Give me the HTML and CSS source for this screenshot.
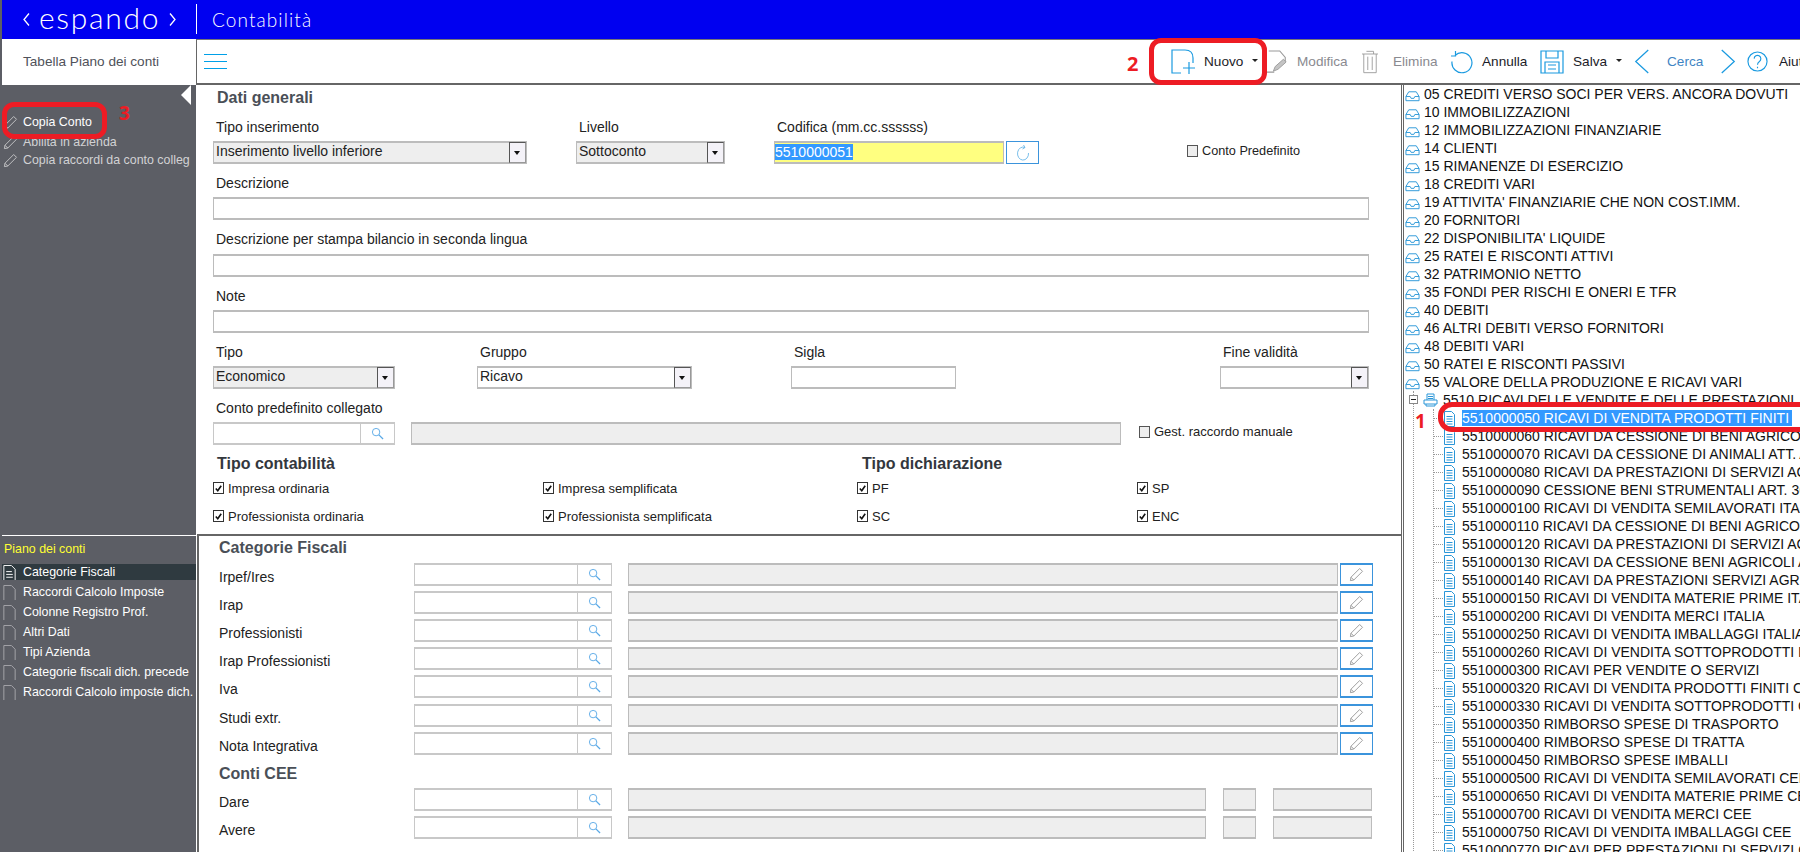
FILE: index.html
```html
<!DOCTYPE html>
<html lang="it">
<head>
<meta charset="utf-8">
<title>Contabilità</title>
<link rel="stylesheet" href="styles.css">
</head>
<body>
<svg class="defs" aria-hidden="true">
  <symbol id="i-pencil" viewBox="0 0 16 16"><path d="M1.5 14.5l.6-3.6L11.4 1.6l3 3-9.3 9.3zM2.1 10.9l3 3" fill="none" stroke="currentColor"/></symbol>
  <symbol id="i-page" viewBox="0 0 13 17"><path d="M.5.5h8l4 4v12H.5z" fill="none" stroke="currentColor"/></symbol>
  <symbol id="i-pagelines" viewBox="0 0 13 17"><path d="M.5.5h8l4 4v12H.5zM3 7h6M3 10h7M3 13h7" fill="none" stroke="currentColor"/></symbol>
  <symbol id="i-doc" viewBox="0 0 11 16"><path d="M.5.5h7l3 3v12H.5zM2.5 5.5h6M2.5 8h6M2.5 10.500h6M2.5 13h6" fill="none" stroke="currentColor"/></symbol>
  <symbol id="i-tray" viewBox="0 0 16 12"><path d="M1 6.500L4 1.500h8l3 5v4.500H1zM1 6.500h4.500l1 2h3l1-2H15" fill="none" stroke="currentColor"/></symbol>
  <symbol id="i-print" viewBox="0 0 15 14"><path d="M4 7V1h7v6M1 7h13v4H1zM3 11v2h9v-2M5 3.500h5M5 5.500h5" fill="none" stroke="currentColor"/></symbol>
  <symbol id="i-search" viewBox="0 0 14 14"><circle cx="5.500" cy="5.500" r="4" fill="none" stroke="currentColor"/><path d="M8.500 8.500l4.500 4.500" fill="none" stroke="currentColor" stroke-width="1.400"/></symbol>
  <symbol id="i-refresh" viewBox="0 0 14 18"><path d="M9 3.500A5.500 6.500 0 1 0 12.500 9M7.500 1L9 3.500 6.500 5" fill="none" stroke="currentColor" stroke-width=".9"/></symbol>
  <symbol id="i-new" viewBox="0 0 24 26"><path d="M14 1H1v23h9M14 1q8 0 8 8v5M18 13v12M12 19h12" fill="none" stroke="currentColor" stroke-width="1.200"/></symbol>
  <symbol id="i-editdoc" viewBox="0 0 24 26"><path d="M3 1h12l6 7v4M1 24h8" fill="none" stroke="currentColor" stroke-width="1.200"/><path d="M8 23l2-5 9-8 3 3-9 8z" fill="#c4c4c4" stroke="currentColor"/></symbol>
  <symbol id="i-trash" viewBox="0 0 18 26"><path d="M0 4h18M5 1h8v3M2 4v21h14V4M6.500 7v15M11.500 7v15" fill="none" stroke="currentColor"/></symbol>
  <symbol id="i-undo" viewBox="0 0 23 24"><path d="M5 5.500a10 10 0 1 1-3 6M5.500 1v5H1" fill="none" stroke="currentColor" stroke-width="1.200"/></symbol>
  <symbol id="i-save" viewBox="0 0 24 24"><path d="M1 1h22v22H1zM6 1v7h12V1M5 23V12h14v11M8 15h8M8 19h8" fill="none" stroke="currentColor" stroke-width="1.200"/></symbol>
  <symbol id="i-left" viewBox="0 0 14 24"><path d="M13 1L1 12l12 11" fill="none" stroke="currentColor" stroke-width="1.200"/></symbol>
  <symbol id="i-right" viewBox="0 0 14 24"><path d="M1 1l12 11L1 23" fill="none" stroke="currentColor" stroke-width="1.200"/></symbol>
  <symbol id="i-help" viewBox="0 0 22 22"><circle cx="11" cy="11" r="10" fill="none" stroke="currentColor" stroke-width="1.200"/><path d="M7.500 8a3.500 3.500 0 1 1 5.500 3c-1.500 1-2 1.500-2 3.500M11 16.500v1.500" fill="none" stroke="currentColor" stroke-width="1.200"/></symbol>
  <symbol id="i-check" viewBox="0 0 10 10"><path d="M2 5l2.200 2.500L8 2" fill="none" stroke="#111" stroke-width="1.800"/></symbol>
</svg>

<div class="app">
  <header class="topbar">
    <div class="logo">
      <svg class="logo-chev" viewBox="0 0 7 13"><path d="M6 .5L1 6.500l5 6" fill="none" stroke="#fff" stroke-width="1.300"/></svg>
      <span class="logo-text">espando</span>
      <svg class="logo-chev" viewBox="0 0 7 13"><path d="M1 .5l5 6-5 6" fill="none" stroke="#fff" stroke-width="1.300"/></svg>
    </div>
    <div class="module">Contabilità</div>
  </header>

  <div class="subbar">
    <div class="tab">Tabella Piano dei conti</div>
    <div class="toolbar">
      <div class="burger"><span></span><span></span><span></span></div>
      <div class="tools">
        <div class="tool tool-blue"><svg class="ti ti-new"><use href="#i-new"/></svg><span class="tl">Nuovo</span><span class="caret"></span></div>
        <div class="tool tool-gray"><svg class="ti ti-edit"><use href="#i-editdoc"/></svg><span class="tl">Modifica</span></div>
        <div class="tool tool-gray"><svg class="ti ti-trash"><use href="#i-trash"/></svg><span class="tl tl-wide">Elimina</span></div>
        <div class="tool tool-blue"><svg class="ti ti-undo"><use href="#i-undo"/></svg><span class="tl">Annulla</span></div>
        <div class="tool tool-blue"><svg class="ti ti-save"><use href="#i-save"/></svg><span class="tl">Salva</span><span class="caret"></span></div>
        <div class="tool tool-blue"><svg class="ti ti-chev"><use href="#i-left"/></svg><span class="tl tl-cerca">Cerca</span></div>
        <div class="tool tool-blue"><svg class="ti ti-chev"><use href="#i-right"/></svg></div>
        <div class="tool tool-blue"><svg class="ti ti-help"><use href="#i-help"/></svg><span class="tl tl-aiuto">Aiuto</span></div>
      </div>
    </div>
  </div>

  <div class="content">
    <aside class="sidebar">
      <div class="side-top">
        <div class="collapse"></div>
        <div class="side-action side-action-first"><svg class="si"><use href="#i-pencil"/></svg><span>Copia Conto</span></div>
        <div class="side-action side-dim"><svg class="si"><use href="#i-pencil"/></svg><span>Abilita in azienda</span></div>
        <div class="side-action side-dim"><svg class="si"><use href="#i-pencil"/></svg><span>Copia raccordi da conto colleg</span></div>
      </div>
      <div class="side-bottom">
        <div class="side-title">Piano dei conti</div>
        <div class="nav-item active"><svg class="ni"><use href="#i-pagelines"/></svg><span>Categorie Fiscali</span></div>
        <div class="nav-item"><svg class="ni"><use href="#i-page"/></svg><span>Raccordi Calcolo Imposte</span></div>
        <div class="nav-item"><svg class="ni"><use href="#i-page"/></svg><span>Colonne Registro Prof.</span></div>
        <div class="nav-item"><svg class="ni"><use href="#i-page"/></svg><span>Altri Dati</span></div>
        <div class="nav-item"><svg class="ni"><use href="#i-page"/></svg><span>Tipi Azienda</span></div>
        <div class="nav-item"><svg class="ni"><use href="#i-page"/></svg><span>Categorie fiscali dich. precede</span></div>
        <div class="nav-item"><svg class="ni"><use href="#i-page"/></svg><span>Raccordi Calcolo imposte dich.</span></div>
      </div>
    </aside>

    <main class="main">
      <section class="general">
        <h2 class="h-general">Dati generali</h2>

        <div class="row">
          <div class="field w-tipoins"><label class="lbl">Tipo inserimento</label><div class="sel sel-off"><span>Inserimento livello inferiore</span><i class="arrow"></i></div></div>
          <div class="field w-livello"><label class="lbl">Livello</label><div class="sel sel-off"><span>Sottoconto</span><i class="arrow"></i></div></div>
          <div class="field w-codifica"><label class="lbl">Codifica (mm.cc.ssssss)</label><div class="inp inp-yellow"><span class="selected-text">5510000051</span></div></div>
          <button class="btn-refresh"><svg class="rf"><use href="#i-refresh"/></svg></button>
          <div class="chk chk-pred"><span class="box box-off"></span>Conto Predefinito</div>
        </div>

        <div class="field w-full"><label class="lbl">Descrizione</label><div class="inp"></div></div>
        <div class="field w-full"><label class="lbl lbl-27">Descrizione per stampa bilancio in seconda lingua</label><div class="inp"></div></div>
        <div class="field w-full"><label class="lbl">Note</label><div class="inp"></div></div>

        <div class="row row-b">
          <div class="field w-tipo"><label class="lbl">Tipo</label><div class="sel sel-off"><span>Economico</span><i class="arrow"></i></div></div>
          <div class="field w-gruppo"><label class="lbl">Gruppo</label><div class="sel"><span>Ricavo</span><i class="arrow"></i></div></div>
          <div class="field w-sigla"><label class="lbl">Sigla</label><div class="inp"></div></div>
          <div class="field w-fine"><label class="lbl">Fine validità</label><div class="sel"><span></span><i class="arrow"></i></div></div>
        </div>

        <div class="row">
          <div class="field w-lookup-a"><label class="lbl">Conto predefinito collegato</label><div class="lookup"><div class="lookup-in"></div><div class="lookup-btn"><svg class="sr"><use href="#i-search"/></svg></div></div></div>
          <div class="field w-linked"><label class="lbl">&nbsp;</label><div class="inp inp-off"></div></div>
          <div class="chk chk-gest"><span class="box box-off"></span>Gest. raccordo manuale</div>
        </div>

        <div class="heads">
          <h3 class="h-sub">Tipo contabilità</h3>
          <h3 class="h-sub">Tipo dichiarazione</h3>
        </div>
        <div class="checks">
          <div class="chk"><span class="box"><svg class="ck"><use href="#i-check"/></svg></span>Impresa ordinaria</div>
          <div class="chk"><span class="box"><svg class="ck"><use href="#i-check"/></svg></span>Impresa semplificata</div>
          <div class="chk"><span class="box"><svg class="ck"><use href="#i-check"/></svg></span>PF</div>
          <div class="chk"><span class="box"><svg class="ck"><use href="#i-check"/></svg></span>SP</div>
          <div class="chk"><span class="box"><svg class="ck"><use href="#i-check"/></svg></span>Professionista ordinaria</div>
          <div class="chk"><span class="box"><svg class="ck"><use href="#i-check"/></svg></span>Professionista semplificata</div>
          <div class="chk"><span class="box"><svg class="ck"><use href="#i-check"/></svg></span>SC</div>
          <div class="chk"><span class="box"><svg class="ck"><use href="#i-check"/></svg></span>ENC</div>
        </div>
      </section>

      <section class="fiscal">
        <h2 class="h-fiscal">Categorie Fiscali</h2>
        <div class="frow"><div class="flbl">Irpef/Ires</div><div class="lookup"><div class="lookup-in"></div><div class="lookup-btn"><svg class="sr"><use href="#i-search"/></svg></div></div><div class="inp inp-off"></div><button class="btn-edit"><svg class="ed"><use href="#i-pencil"/></svg></button></div>
        <div class="frow"><div class="flbl">Irap</div><div class="lookup"><div class="lookup-in"></div><div class="lookup-btn"><svg class="sr"><use href="#i-search"/></svg></div></div><div class="inp inp-off"></div><button class="btn-edit"><svg class="ed"><use href="#i-pencil"/></svg></button></div>
        <div class="frow"><div class="flbl">Professionisti</div><div class="lookup"><div class="lookup-in"></div><div class="lookup-btn"><svg class="sr"><use href="#i-search"/></svg></div></div><div class="inp inp-off"></div><button class="btn-edit"><svg class="ed"><use href="#i-pencil"/></svg></button></div>
        <div class="frow"><div class="flbl">Irap Professionisti</div><div class="lookup"><div class="lookup-in"></div><div class="lookup-btn"><svg class="sr"><use href="#i-search"/></svg></div></div><div class="inp inp-off"></div><button class="btn-edit"><svg class="ed"><use href="#i-pencil"/></svg></button></div>
        <div class="frow frow-gap"><div class="flbl">Iva</div><div class="lookup"><div class="lookup-in"></div><div class="lookup-btn"><svg class="sr"><use href="#i-search"/></svg></div></div><div class="inp inp-off"></div><button class="btn-edit"><svg class="ed"><use href="#i-pencil"/></svg></button></div>
        <div class="frow"><div class="flbl">Studi extr.</div><div class="lookup"><div class="lookup-in"></div><div class="lookup-btn"><svg class="sr"><use href="#i-search"/></svg></div></div><div class="inp inp-off"></div><button class="btn-edit"><svg class="ed"><use href="#i-pencil"/></svg></button></div>
        <div class="frow"><div class="flbl">Nota Integrativa</div><div class="lookup"><div class="lookup-in"></div><div class="lookup-btn"><svg class="sr"><use href="#i-search"/></svg></div></div><div class="inp inp-off"></div><button class="btn-edit"><svg class="ed"><use href="#i-pencil"/></svg></button></div>
        <h2 class="h-cee">Conti CEE</h2>
        <div class="frow frow-cee"><div class="flbl">Dare</div><div class="lookup"><div class="lookup-in"></div><div class="lookup-btn"><svg class="sr"><use href="#i-search"/></svg></div></div><div class="inp inp-off"></div><div class="inp inp-off"></div><div class="inp inp-off"></div></div>
        <div class="frow frow-cee"><div class="flbl">Avere</div><div class="lookup"><div class="lookup-in"></div><div class="lookup-btn"><svg class="sr"><use href="#i-search"/></svg></div></div><div class="inp inp-off"></div><div class="inp inp-off"></div><div class="inp inp-off"></div></div>
      </section>
    </main>

    <nav class="tree">
      <div class="node root"><svg class="t-tray"><use href="#i-tray"/></svg>05 CREDITI VERSO SOCI PER VERS. ANCORA DOVUTI</div>
      <div class="node root"><svg class="t-tray"><use href="#i-tray"/></svg>10 IMMOBILIZZAZIONI</div>
      <div class="node root"><svg class="t-tray"><use href="#i-tray"/></svg>12 IMMOBILIZZAZIONI FINANZIARIE</div>
      <div class="node root"><svg class="t-tray"><use href="#i-tray"/></svg>14 CLIENTI</div>
      <div class="node root"><svg class="t-tray"><use href="#i-tray"/></svg>15 RIMANENZE DI ESERCIZIO</div>
      <div class="node root"><svg class="t-tray"><use href="#i-tray"/></svg>18 CREDITI VARI</div>
      <div class="node root"><svg class="t-tray"><use href="#i-tray"/></svg>19 ATTIVITA' FINANZIARIE CHE NON COST.IMM.</div>
      <div class="node root"><svg class="t-tray"><use href="#i-tray"/></svg>20 FORNITORI</div>
      <div class="node root"><svg class="t-tray"><use href="#i-tray"/></svg>22 DISPONIBILITA' LIQUIDE</div>
      <div class="node root"><svg class="t-tray"><use href="#i-tray"/></svg>25 RATEI E RISCONTI ATTIVI</div>
      <div class="node root"><svg class="t-tray"><use href="#i-tray"/></svg>32 PATRIMONIO NETTO</div>
      <div class="node root"><svg class="t-tray"><use href="#i-tray"/></svg>35 FONDI PER RISCHI E ONERI E TFR</div>
      <div class="node root"><svg class="t-tray"><use href="#i-tray"/></svg>40 DEBITI</div>
      <div class="node root"><svg class="t-tray"><use href="#i-tray"/></svg>46 ALTRI DEBITI VERSO FORNITORI</div>
      <div class="node root"><svg class="t-tray"><use href="#i-tray"/></svg>48 DEBITI VARI</div>
      <div class="node root"><svg class="t-tray"><use href="#i-tray"/></svg>50 RATEI E RISCONTI PASSIVI</div>
      <div class="node root"><svg class="t-tray"><use href="#i-tray"/></svg>55 VALORE DELLA PRODUZIONE E RICAVI VARI</div>
      <div class="branch">
        <div class="node l1"><span class="minus"></span><svg class="t-print"><use href="#i-print"/></svg>5510 RICAVI DELLE VENDITE E DELLE PRESTAZIONI</div>
        <div class="leaves">
          <div class="node leaf"><svg class="t-doc"><use href="#i-doc"/></svg><span class="leaf-sel">5510000050 RICAVI DI VENDITA PRODOTTI FINITI</span></div>
          <div class="node leaf"><svg class="t-doc"><use href="#i-doc"/></svg>5510000060 RICAVI DA CESSIONE DI BENI AGRICOLI ITALIA</div>
          <div class="node leaf"><svg class="t-doc"><use href="#i-doc"/></svg>5510000070 RICAVI DA CESSIONE DI ANIMALI ATT. AGRICOLE</div>
          <div class="node leaf"><svg class="t-doc"><use href="#i-doc"/></svg>5510000080 RICAVI DA PRESTAZIONI DI SERVIZI AGRICOLI</div>
          <div class="node leaf"><svg class="t-doc"><use href="#i-doc"/></svg>5510000090 CESSIONE BENI STRUMENTALI ART. 36</div>
          <div class="node leaf"><svg class="t-doc"><use href="#i-doc"/></svg>5510000100 RICAVI DI VENDITA SEMILAVORATI ITALIA</div>
          <div class="node leaf"><svg class="t-doc"><use href="#i-doc"/></svg>5510000110 RICAVI DA CESSIONE DI BENI AGRICOLI</div>
          <div class="node leaf"><svg class="t-doc"><use href="#i-doc"/></svg>5510000120 RICAVI DA PRESTAZIONI DI SERVIZI AGRICOLI</div>
          <div class="node leaf"><svg class="t-doc"><use href="#i-doc"/></svg>5510000130 RICAVI DA CESSIONE BENI AGRICOLI ALL.</div>
          <div class="node leaf"><svg class="t-doc"><use href="#i-doc"/></svg>5510000140 RICAVI DA PRESTAZIONI SERVIZI AGRICOLI</div>
          <div class="node leaf"><svg class="t-doc"><use href="#i-doc"/></svg>5510000150 RICAVI DI VENDITA MATERIE PRIME ITALIA</div>
          <div class="node leaf"><svg class="t-doc"><use href="#i-doc"/></svg>5510000200 RICAVI DI VENDITA MERCI ITALIA</div>
          <div class="node leaf"><svg class="t-doc"><use href="#i-doc"/></svg>5510000250 RICAVI DI VENDITA IMBALLAGGI ITALIA</div>
          <div class="node leaf"><svg class="t-doc"><use href="#i-doc"/></svg>5510000260 RICAVI DI VENDITA SOTTOPRODOTTI ITALIA</div>
          <div class="node leaf"><svg class="t-doc"><use href="#i-doc"/></svg>5510000300 RICAVI PER VENDITE O SERVIZI</div>
          <div class="node leaf"><svg class="t-doc"><use href="#i-doc"/></svg>5510000320 RICAVI DI VENDITA PRODOTTI FINITI CEE</div>
          <div class="node leaf"><svg class="t-doc"><use href="#i-doc"/></svg>5510000330 RICAVI DI VENDITA SOTTOPRODOTTI CEE</div>
          <div class="node leaf"><svg class="t-doc"><use href="#i-doc"/></svg>5510000350 RIMBORSO SPESE DI TRASPORTO</div>
          <div class="node leaf"><svg class="t-doc"><use href="#i-doc"/></svg>5510000400 RIMBORSO SPESE DI TRATTA</div>
          <div class="node leaf"><svg class="t-doc"><use href="#i-doc"/></svg>5510000450 RIMBORSO SPESE IMBALLI</div>
          <div class="node leaf"><svg class="t-doc"><use href="#i-doc"/></svg>5510000500 RICAVI DI VENDITA SEMILAVORATI CEE</div>
          <div class="node leaf"><svg class="t-doc"><use href="#i-doc"/></svg>5510000650 RICAVI DI VENDITA MATERIE PRIME CEE</div>
          <div class="node leaf"><svg class="t-doc"><use href="#i-doc"/></svg>5510000700 RICAVI DI VENDITA MERCI CEE</div>
          <div class="node leaf"><svg class="t-doc"><use href="#i-doc"/></svg>5510000750 RICAVI DI VENDITA IMBALLAGGI CEE</div>
          <div class="node leaf"><svg class="t-doc"><use href="#i-doc"/></svg>5510000770 RICAVI PER PRESTAZIONI DI SERVIZI CEE</div>
        </div>
      </div>
    </nav>
  </div>

  <div class="mark mark-1"></div><span class="num num-1">1</span>
  <div class="mark mark-2"></div><span class="num num-2">2</span>
  <div class="mark mark-3"></div><span class="num num-3">3</span>
</div>
</body>
</html>
```

FILE: styles.css
```css
* { box-sizing: border-box; }
html, body { margin: 0; height: 100%; }
body { overflow: hidden; background: #5c5e65; font: 14px "Liberation Sans", Arial, sans-serif; color: #222; }
.defs { display: none; }
.app { position: relative; width: 1800px; height: 852px; padding-left: 2px; overflow: hidden; display: flex; flex-direction: column; }

/* header */
.topbar { flex: 0 0 39px; background: #0000f0; display: flex; align-items: stretch; color: #fff; font-family: Lato, "Liberation Sans", sans-serif; font-weight: 300; }
.logo { width: 195px; margin: 4px 0 5px; border-right: 1px solid #fff; display: flex; align-items: center; padding-left: 21px; gap: 9px; }
.logo-chev { width: 7px; height: 13px; flex: none; }
.logo-text { font-size: 30px; line-height: 30px; letter-spacing: 1.7px; margin-top: -4px; }
.module { font-size: 19px; letter-spacing: 1.1px; line-height: 39px; padding-left: 15px; }

/* second bar */
.subbar { flex: 0 0 45px; display: flex; background: #fff; }
.tab { width: 194px; padding-left: 21px; line-height: 46px; color: #50525a; font-size: 13.6px; }
.toolbar { flex: 1; border-left: 1px solid #666; border-top: 1px solid #777; border-bottom: 2px solid #666; display: flex; align-items: center; justify-content: space-between; padding-left: 7px; }
.burger { width: 23px; display: flex; flex-direction: column; gap: 6px; }
.burger span { height: 1px; background: #00a0e8; }
.tools { display: grid; grid-template-columns: 95px 96px 88px 90px 94px 86px 27px 53px; align-items: center; font-size: 13.6px; }
.tool { display: flex; align-items: center; white-space: nowrap; overflow: hidden; height: 30px; }
.tool-blue { color: #1a9ae0; }
.tool-gray { color: #999; }
.ti { flex: none; }
.ti-new { width: 24px; height: 26px; }
.ti-edit { width: 22px; height: 26px; margin-left: 0; }
.ti-trash { width: 16px; height: 26px; }
.ti-undo { width: 23px; height: 24px; }
.ti-save { width: 24px; height: 24px; }
.ti-chev { width: 16px; height: 25px; }
.ti-help { width: 21px; height: 21px; }
.tl { color: #1c1c28; margin-left: 9px; }
.tool-gray .tl { color: #8a8a90; }
.tl-wide { margin-left: 15px; }
.tl-cerca { color: #3f85c4; margin-left: 17px; }
.tl-aiuto { margin-left: 11px; }
.caret { width: 0; height: 0; border: 3px solid transparent; border-top: 3px solid #222; border-bottom: 0; margin-left: 9px; margin-top: -2px; }

/* columns */
.content { flex: 1; display: flex; min-height: 0; }
.sidebar { width: 194px; background: #5c5e65; color: #fff; display: flex; flex-direction: column; flex: none; font-size: 12.4px; }
.side-top { height: 451px; border-bottom: 1px solid #fff; padding-top: 28px; position: relative; }
.collapse { position: absolute; right: 5px; top: 0; width: 0; height: 0; border-style: solid; border-width: 10px 10px 10px 0; border-color: transparent #fff transparent transparent; }
.side-action { height: 18px; display: flex; align-items: center; gap: 5px; padding-left: 1px; color: #fff; white-space: nowrap; overflow: hidden; }
.side-action-first { margin-bottom: 2px; }
.side-dim { color: #d2d2d4; }
.si { width: 15px; height: 15px; color: #c4c4c6; flex: none; }
.side-bottom { display: flex; flex-direction: column; }
.side-title { height: 26px; line-height: 26px; color: #ffff33; padding-left: 2px; }
.nav-item { height: 16px; margin: 2px 0; display: flex; align-items: center; gap: 7px; padding-left: 1px; white-space: nowrap; overflow: hidden; }
.nav-item.active { background: #2f3a40; }
.ni { width: 13px; height: 16px; color: #a8a8ac; flex: none; margin-top: 1px; }
.nav-item.active .ni { color: #fff; }

.main { width: 1205px; flex: none; background: #fff; display: flex; flex-direction: column; min-height: 0; }
.general { padding-left: 17px; height: 449px; }
.h-general { margin: 0; height: 30px; padding: 4px 0 0 4px; font-size: 16px; line-height: 18px; color: #4a4f57; }
.row { display: flex; align-items: flex-end; }
.field { display: flex; flex-direction: column; flex: none; margin-bottom: 7px; }
.lbl { display: block; height: 26px; line-height: 25px; padding-left: 3px; white-space: nowrap; }
.lbl-27 { height: 27px; }
.w-tipoins { width: 314px; margin-right: 49px; }
.w-livello { width: 149px; margin-right: 49px; }
.w-codifica { width: 230px; margin-right: 2px; }
.w-full { width: 1156px; }
.w-tipo { width: 182px; margin-right: 82px; }
.w-gruppo { width: 215px; margin-right: 99px; }
.w-sigla { width: 165px; margin-right: 264px; }
.w-fine { width: 149px; }
.w-lookup-a { width: 182px; margin-right: 16px; }
.w-linked { width: 710px; }
.w-lookup-a .lookup { width: 182px; }

.inp, .sel { height: 23px; border: 1px solid #bcbcbc; border-bottom-width: 2px; border-top-width: 2px; background: #fff; line-height: 17px; padding-left: 2px; }
.inp-off { background: #eee; }
.inp-yellow { background: #ffff80; padding-left: 0; }
.selected-text { background: #3399ff; color: #fff; display: inline-block; line-height: 16px; margin-top: 1px; vertical-align: top; }
.sel { display: flex; justify-content: space-between; align-items: stretch; padding-left: 2px; }
.sel-off { background: #eee; }
.arrow { width: 17px; margin: -1px 0 -1px; background: #f4f2f8; border: 1px solid #555; border-right-color: #999; border-bottom-color: #999; position: relative; flex: none; }
.arrow::after { content: ""; position: absolute; left: 4px; top: 8px; border: 3.500px solid transparent; border-top: 4px solid #111; border-bottom: 0; }

.btn-refresh { width: 33px; height: 23px; margin-bottom: 7px; padding: 0; border: 1px solid #3b94dc; background: #fff; display: flex; align-items: center; justify-content: center; flex: none; }
.rf { width: 14px; height: 18px; color: #6ab7e8; }
.chk { display: flex; align-items: center; gap: 4px; font-size: 13px; white-space: nowrap; }
.box { width: 11px; height: 12px; border: 1px solid #333; background: #fff; display: flex; align-items: center; justify-content: center; flex: none; }
.box-off { background: #eee; border-color: #555; }
.ck { width: 9px; height: 9px; }
.chk-pred { margin: 0 0 13px 148px; font-size: 12.700px; }
.chk-gest { margin: 0 0 13px 18px; }

.lookup { display: flex; width: 198px; flex: none; height: 23px; border: 1px solid #c8c8c8; border-bottom-width: 2px; border-top-width: 2px; }
.lookup-in { flex: 1; background: #fff; }
.lookup-btn { width: 34px; border-left: 1px solid #c8c8c8; display: flex; align-items: center; justify-content: center; background: #fff; }
.sr { width: 13px; height: 13px; color: #5aa9e6; }

.heads { display: grid; grid-template-columns: 645px 1fr; height: 26px; align-items: end; padding-left: 4px; }
.h-sub { margin: 0; font-size: 16px; line-height: 20px; height: 24px; color: #33373d; }
.checks { display: grid; grid-template-columns: 330px 314px 280px 1fr; grid-auto-rows: 28px; align-items: center; margin-top: -4px; }

.fiscal { flex: 1; border-left: 2px solid #666; border-top: 2px solid #666; margin-left: 1px; padding-left: 20px; min-height: 0; overflow: hidden; }
.h-fiscal { margin: 0; height: 27px; font-size: 16px; line-height: 24px; color: #4a4f57; }
.h-cee { margin: 0; height: 28px; font-size: 16px; line-height: 26px; padding-top: 1px; color: #4a4f57; }
.frow { display: flex; height: 23px; margin-bottom: 5px; }
.frow-gap { margin-bottom: 6px; }
.flbl { width: 195px; flex: none; height: 23px; line-height: 29px; white-space: nowrap; }
.frow .inp { width: 710px; margin-left: 16px; flex: none; }
.btn-edit { width: 33px; height: 23px; margin-left: 2px; padding: 0; border: 1px solid #3b94dc; border-width: 2px 1px; background: #fff; display: flex; align-items: center; justify-content: center; flex: none; }
.ed { width: 15px; height: 15px; color: #999; }
.frow-cee .inp { width: 33px; margin-left: 17px; }
.frow-cee .lookup + .inp { width: 578px; margin-left: 16px; }
.frow-cee .inp:last-child { width: 99px; }

/* tree */
.tree { flex: 1; min-width: 0; border-left: 3px double #666; background: #fff; overflow: hidden; font-size: 14px; color: #111; white-space: nowrap; }
.node { height: 18px; display: flex; align-items: center; line-height: 16px; padding-bottom: 1px; }
.root { padding-left: 1px; gap: 4px; }
.t-tray { width: 15px; height: 12px; color: #2a96d8; flex: none; margin-top: 4px; }
.branch { margin-left: 9px; border-left: 1px dotted #999; }
.l1 { margin-left: -5px; gap: 5px; }
.minus { width: 9px; height: 9px; border: 1px solid #888; background: #fff; position: relative; flex: none; }
.minus::after { content: ""; position: absolute; left: 1px; right: 1px; top: 3px; height: 1px; background: #222; }
.t-print { width: 15px; height: 14px; color: #2a96d8; flex: none; }
.leaves { margin-left: 19px; border-left: 1px dotted #999; }
.leaf { gap: 7px; position: relative; padding-left: 10px; }
.leaf::before { content: ""; position: absolute; left: 0; width: 9px; top: 9px; border-top: 1px dotted #999; }
.t-doc { width: 11px; height: 16px; color: #2a96d8; flex: none; margin-top: 2px; }
.leaf-sel { background: #3399ff; color: #fff; line-height: 16px; padding: 0 3px 0 0; }

/* annotations laid over the screen */
.mark { position: absolute; border: 5px solid #ed1c24; border-radius: 12px; }
.mark-1 { left: 1438px; top: 402px; width: 380px; height: 30px; border-radius: 14px; }
.mark-2 { left: 1149px; top: 38px; width: 118px; height: 47px; }
.mark-3 { left: 2px; top: 102px; width: 105px; height: 37px; }
.num { position: absolute; color: #ed1c24; font-weight: bold; font-family: "Open Sans", "Liberation Sans", sans-serif; line-height: 1; }
.num-1 { left: 1415px; top: 412px; font-size: 19px; }
.num-2 { left: 1127px; top: 54px; font-size: 20px; }
.num-3 { left: 119px; top: 104px; font-size: 19px; }
```
